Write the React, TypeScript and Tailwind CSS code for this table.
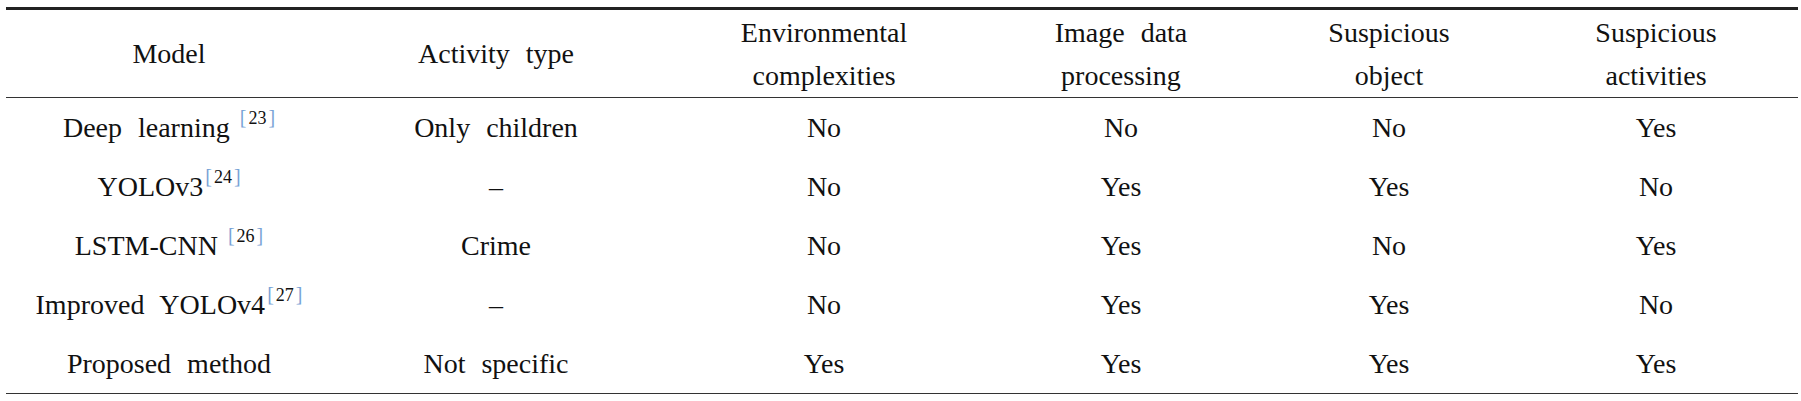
const cols = ["w-[326px]", "w-[328px]", "w-[328px]", "w-[266px]", "w-[270px]", "w-[264px]"];

const serif = { fontFamily: '"Liberation Serif", "Times New Roman", serif' };

const Ref = ({ n, space }: { n: number; space?: boolean }) => (
  <span className={`relative -top-[13px] inline-flex items-baseline ${space ? "ml-[10px]" : "ml-[2px]"}`}>
    <span className="text-[20px] text-[#79a3d6]">[</span>
    <span className="text-[18px] text-[#111] px-[2px]">{n}</span>
    <span className="text-[20px] text-[#79a3d6]">]</span>
  </span>
);

type Row = { model: React.ReactNode; cells: string[] };

const rows: Row[] = [
  { model: <>Deep learning<Ref n={23} space /></>, cells: ["Only children", "No", "No", "No", "Yes"] },
  { model: <>YOLOv3<Ref n={24} /></>, cells: ["–", "No", "Yes", "Yes", "No"] },
  { model: <>LSTM-CNN<Ref n={26} space /></>, cells: ["Crime", "No", "Yes", "No", "Yes"] },
  { model: <>Improved YOLOv4<Ref n={27} /></>, cells: ["–", "No", "Yes", "Yes", "No"] },
  { model: <>Proposed method</>, cells: ["Not specific", "Yes", "Yes", "Yes", "Yes"] },
];

const headers = [
  ["Model"],
  ["Activity type"],
  ["Environmental", "complexities"],
  ["Image data", "processing"],
  ["Suspicious", "object"],
  ["Suspicious", "activities"],
];

export default function App() {
  return (
    <div className="w-[1801px] h-[401px] bg-white pt-[7px] text-[#111] [word-spacing:9px]" style={serif}>
      <div className="ml-[6px] w-[1792px] border-t-[3px] border-b-[1.5px] border-t-[#222] border-b-[#333]">
        <div className="border-b-[1.5px] border-[#333] h-[88px] flex">
          {headers.map((h, i) => (
            <div key={i} className={`${cols[i]} shrink-0 flex flex-col items-center justify-center text-[28px] leading-[43px] whitespace-nowrap`}>
              {h.map((line) => (
                <div key={line}>{line}</div>
              ))}
            </div>
          ))}
        </div>
        {rows.map((r, ri) => (
          <div key={ri} className="h-[59px] flex text-[28px]">
            <div className={`${cols[0]} shrink-0 flex items-center justify-center whitespace-nowrap`}>
              <span className="inline-flex items-baseline">{r.model}</span>
            </div>
            {r.cells.map((c, ci) => (
              <div key={ci} className={`${cols[ci + 1]} shrink-0 flex items-center justify-center whitespace-nowrap`}>
                {c}
              </div>
            ))}
          </div>
        ))}
      </div>
    </div>
  );
}
